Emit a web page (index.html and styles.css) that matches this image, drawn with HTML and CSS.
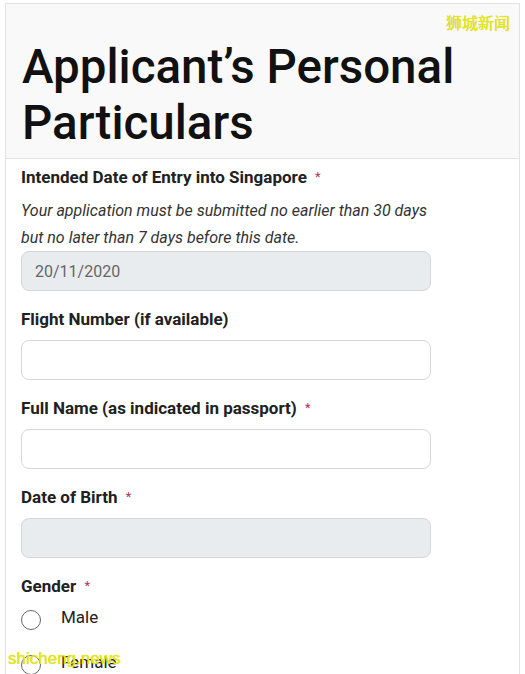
FILE: index.html
```html
<!DOCTYPE html>
<html lang="en">
<head>
  <meta charset="UTF-8">
  <meta name="viewport" content="width=device-width, initial-scale=1">
  <title>Applicant's Personal Particulars</title>
  <link rel="stylesheet" href="styles.css">
</head>
<body>
  <div class="card">
    <div class="card-header">
      <h1>Applicant’s Personal Particulars</h1>
    </div>
    <form class="card-body">
      <div class="field">
        <label>Intended Date of Entry into Singapore <span class="req">*</span></label>
        <p class="hint">Your application must be submitted no earlier than 30 days but no later than 7 days before this date.</p>
        <input type="text" value="20/11/2020" disabled>
      </div>
      <div class="field">
        <label>Flight Number (if available)</label>
        <input type="text">
      </div>
      <div class="field">
        <label>Full Name (as indicated in passport) <span class="req">*</span></label>
        <input type="text">
      </div>
      <div class="field">
        <label>Date of Birth <span class="req">*</span></label>
        <input type="text" disabled>
      </div>
      <div class="field">
        <label>Gender <span class="req">*</span></label>
        <div class="radio-list">
          <div class="radio"><input type="radio" name="gender" id="male"><span>Male</span></div>
          <div class="radio"><input type="radio" name="gender" id="female"><span>Female</span></div>
        </div>
      </div>
    </form>
  </div>

  <div class="mark mark-top">狮城新闻</div>
  <div class="mark mark-bottom">shicheng.news</div>
</body>
</html>
```

FILE: styles.css
```css
body {
  margin: 0;
  background: #fff;
  font-family: Roboto, "Noto Sans CJK SC", sans-serif;
  color: #212121;
}
.card {
  margin: 3px 0 0 5px;
  width: 513px;
  min-height: 720px;
  border: 1px solid #e3e3e3;
}
.card-header {
  background: #f9f9fa;
  border-bottom: 1px solid #e3e3e3;
  padding: 35px 16px 7px;
}
.card-header h1 {
  margin: 0;
  font-size: 47.5px;
  line-height: 56px;
  font-weight: 500;
  color: #111;
}
.card-body {
  padding: 6px 15px 0;
}
.field {
  margin-bottom: 16px;
}
.field label {
  display: block;
  font-size: 17px;
  line-height: 24px;
  font-weight: bold;
  margin-bottom: 9px;
}
.req {
  color: #b8325a;
  font-weight: normal;
  font-size: 13px;
  vertical-align: 2px;
  margin-left: 4px;
}
.hint {
  margin: -1px 0 0;
  font-size: 16px;
  line-height: 27px;
  font-style: italic;
  color: #333;
  width: 420px;
}
.field input[type="text"] {
  display: block;
  box-sizing: border-box;
  width: 410px;
  height: 40px;
  padding: 0 13px;
  border: 1px solid #d4d6d9;
  border-radius: 8px;
  background: #fff;
  font-family: Roboto, sans-serif;
  font-size: 16px;
  color: #666;
}
.field input[disabled] {
  background: #e9ecef;
}
.radio-list {
  padding-top: 3px;
}
.radio {
  display: flex;
  align-items: center;
  height: 20px;
  margin-bottom: 25px;
  font-size: 17px;
  color: #222;
}
.radio input {
  appearance: none;
  margin: 0 20px 0 0;
  width: 20px;
  height: 20px;
  border: 1px solid #666;
  border-radius: 50%;
  background: #fff;
}
.radio span {
  position: relative;
  top: -3px;
}
.mark {
  position: absolute;
  color: #e8e800;
  text-shadow: 0 0 1px #c8c860;
  font-family: "Noto Sans CJK SC", sans-serif;
}
.mark-top {
  top: 10px;
  left: 446px;
  font-size: 16px;
}
.mark-bottom {
  top: 649px;
  left: 8px;
  font-size: 17px;
  font-family: "Liberation Sans", sans-serif;
}
```
